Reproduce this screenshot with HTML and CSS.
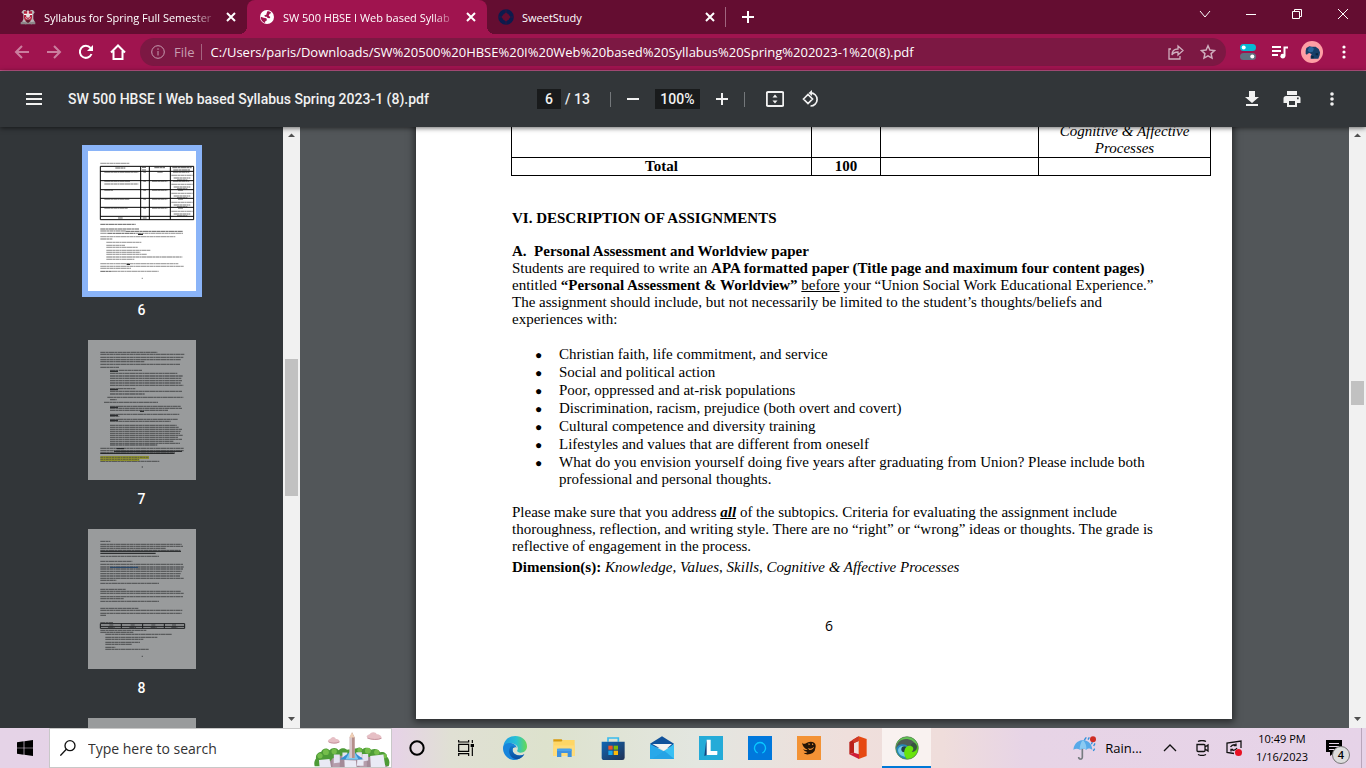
FILE: index.html
```html
<!DOCTYPE html>
<html lang="en">
<head>
<meta charset="utf-8">
<title>SW 500 HBSE I Web based Syllabus Spring 2023-1 (8).pdf</title>
<link rel="stylesheet" href="styles.css">
</head>
<body>
<header class="tabstrip">
  <div class="tab tab-first">
    <svg class="favicon" viewBox="0 0 48 48"><path d="M4 10l6-7h6l4 4 4-4 4 4 5-4h6l5 7-4 6v14l5 10-5 4-6 2-8-4-8 4-7-2-5-4 4-10V16z" fill="#b9b2b5"/><path d="M12 7h24v18c0 8-6 12-12 15-6-3-12-7-12-15z" fill="#b3203c"/><path d="M22 6h4v8h10v4H26v4h-4v-4H12v-4h10z" fill="#fff"/><circle cx="24" cy="20" r="6" fill="#e4dfe1"/><path d="M17 25c2 8 12 8 14 0" stroke="#e9d8dc" stroke-width="3" fill="none"/><path d="M2 40c8-5 14 3 22-2 8 5 14-3 22 2v6H2z" fill="#8d8689"/><path d="M16 36l8-5 8 5-8 6z" fill="#5e1a2c"/></svg>
    <span class="tab-title">Syllabus for Spring Full Semester</span>
    <button class="tab-close" aria-label="Close tab"><svg viewBox="0 0 10 10"><path d="M1 1l8 8M9 1L1 9"/></svg></button>
  </div>
  <div class="tab tab-active">
    <svg class="favicon" viewBox="0 0 48 48"><circle cx="24" cy="24" r="21" fill="#fff"/><path d="M25 7c4-1 9 1 12 5l-5 2-3 6 5 4-2 4-6-1-3-4h-5l-2-4 6-2 1-4z" fill="#a0144f"/><path d="M5 23l9 3 8 2 2 6-5 3-1 5C9 38 5 32 5 23z" fill="#a0144f"/></svg>
    <span class="tab-title">SW 500 HBSE I Web based Syllab</span>
    <button class="tab-close" aria-label="Close tab"><svg viewBox="0 0 10 10"><path d="M1 1l8 8M9 1L1 9"/></svg></button>
  </div>
  <div class="tab tab-last">
    <svg class="favicon" viewBox="0 0 48 48"><circle cx="24" cy="24" r="17" fill="none" stroke="#0c1b4d" stroke-width="13"/><path d="M24 0v10M24 38v10M0 24h10M38 24h10" stroke="#42103a" stroke-width="2"/><path d="M24 10l14 14-14 14-14-14z" fill="#640d31"/></svg>
    <span class="tab-title">SweetStudy</span>
    <button class="tab-close" aria-label="Close tab"><svg viewBox="0 0 10 10"><path d="M1 1l8 8M9 1L1 9"/></svg></button>
  </div>
  <button class="new-tab" aria-label="New tab"><svg viewBox="0 0 12 12"><path d="M6 0v12M0 6h12"/></svg></button>
  <div class="window-controls">
    <button aria-label="Search tabs"><svg viewBox="0 0 12 12"><path d="M1 3l5 6 5-6"/></svg></button>
    <button aria-label="Minimize"><svg viewBox="0 0 12 12"><path d="M1 6.500h10"/></svg></button>
    <button aria-label="Restore"><svg viewBox="0 0 12 12"><path d="M1.500 3.500h7v7h-7zM3.500 3.500v-2h7v7h-2"/></svg></button>
    <button aria-label="Close"><svg viewBox="0 0 12 12"><path d="M1 1l10 10M11 1L1 11"/></svg></button>
  </div>
</header>

<nav class="toolbar">
  <button class="tool dim" aria-label="Back"><svg viewBox="0 0 16 16"><path d="M15 8H2M8 2L2 8l6 6"/></svg></button>
  <button class="tool dim" aria-label="Forward"><svg viewBox="0 0 16 16"><path d="M1 8h13M8 2l6 6-6 6"/></svg></button>
  <button class="tool" aria-label="Reload"><svg viewBox="0 0 16 16"><path d="M13.500 10A6 6 0 1 1 12.500 4"/><path d="M15 1v6H9z" fill="#fff" stroke="none"/></svg></button>
  <button class="tool" aria-label="Home"><svg viewBox="0 0 16 16"><path d="M1 8.500L8 1.500l7 7M3.500 7v8h9V7"/></svg></button>
  <div class="omnibox">
    <svg class="info" viewBox="0 0 14 14"><circle cx="7" cy="7" r="6.300"/><path d="M7 6v4.500M7 3.300v1.500"/></svg>
    <label class="scheme" for="url">File</label>
    <input id="url" class="url" type="text" value="C:/Users/paris/Downloads/SW%20500%20HBSE%20I%20Web%20based%20Syllabus%20Spring%202023-1%20(8).pdf">
    <button class="omni-button" aria-label="Share"><svg viewBox="0 0 16 16"><path stroke-width="1.300" d="M3 5H1v10h11v-3M4 11c0-4 2-6 6-6V2l5 4.500-5 4.500V8c-3 0-5 1-6 3z"/></svg></button>
    <button class="omni-button" aria-label="Bookmark"><svg viewBox="0 0 16 16"><path stroke-width="1.500" d="M8 1.800l1.900 4.200 4.600.5-3.400 3.100.9 4.500L8 11.800l-4 2.300.9-4.500L1.500 6.500 6.100 6z"/></svg></button>
  </div>
  <button class="tool" aria-label="Extension"><svg viewBox="0 0 16 16" stroke="none"><rect y="0" width="16" height="7" rx="3.500" fill="#06b9d3"/><rect y="9" width="16" height="7" rx="3.500" fill="#607080"/><circle cx="3.700" cy="3.500" r="2" fill="#fff"/><circle cx="12.300" cy="12.500" r="2" fill="#fff"/></svg></button>
  <button class="tool" aria-label="Media controls"><svg viewBox="0 0 16 16"><path d="M0 3h9M0 7h9M0 11h6M12.500 12V3.500H16"/><circle cx="10.800" cy="12.200" r="2.400" fill="#fff" stroke="none"/></svg></button>
  <button class="tool" aria-label="Profile"><svg class="avatar" viewBox="0 0 66 66" stroke="none"><circle cx="33" cy="33" r="33" fill="#ff9fa5"/><path d="M14 29l2-8 9-5 8 1 11 0 9 7 4 10-1 9-4 10H29v-8l3-5-7-4-5 2-2 3-4-2z" fill="#173f68"/><path d="M24 19l9-1 6 5-4 9-9 2-6-5z" fill="#2a679c"/><path d="M31 45h7v7h-7zM44 37h7v6h-7z" fill="#0b253e"/></svg></button>
  <button class="tool" aria-label="Menu"><svg viewBox="0 0 16 16" stroke="none"><g fill="#fff"><circle cx="8" cy="3" r="1.600"/><circle cx="8" cy="8" r="1.600"/><circle cx="8" cy="13" r="1.600"/></g></svg></button>
</nav>

<section class="pdf-bar">
  <div class="pdf-left">
    <button class="pdf-button" aria-label="Toggle sidebar"><svg viewBox="0 0 18 18"><path d="M1 4h16M1 9h16M1 14h16"/></svg></button>
    <h1 class="pdf-title">SW 500 HBSE I Web based Syllabus Spring 2023-1 (8).pdf</h1>
  </div>
  <div class="pdf-center">
    <input class="page-input" type="text" value="6" aria-label="Page number">
    <span class="page-count">/ 13</span>
    <span class="divider"></span>
    <button class="pdf-button" aria-label="Zoom out"><svg viewBox="0 0 18 18"><path d="M3 9h12"/></svg></button>
    <input class="zoom-input" type="text" value="100%" aria-label="Zoom level">
    <button class="pdf-button" aria-label="Zoom in"><svg viewBox="0 0 18 18"><path d="M3 9h12M9 3v12"/></svg></button>
    <span class="divider"></span>
    <button class="pdf-button fit" aria-label="Fit to page"><svg viewBox="0 0 18 18"><rect x="0.800" y="2" width="16.500" height="14" rx="1.500"/><path d="M9 4.500l2.500 3h-5zM9 13.500l2.500-3h-5z" fill="#f1f1f1" stroke="none"/></svg></button>
    <button class="pdf-button" aria-label="Rotate"><svg viewBox="0 0 18 18"><path d="M1.500 9L6 4.500l4.500 4.500L6 13.500zM8.500 2.800a6.500 6.500 0 1 1 0 13.200" stroke-width="1.700"/><path d="M10 0v6L6.500 3z" fill="#f1f1f1" stroke="none"/></svg></button>
  </div>
  <div class="pdf-right">
    <button class="pdf-button" aria-label="Download"><svg viewBox="0 0 18 18"><path d="M6 1h6v6h4l-7 6-7-6h4zM3 14h12v2H3z" fill="#f1f1f1" stroke="none"/></svg></button>
    <button class="pdf-button" aria-label="Print"><svg viewBox="0 0 18 18"><path fill-rule="evenodd" d="M4 1h10v4H4zM3 6h12c2 0 2.500 1 2.500 2.500V13H14v4H4v-4H.5V8.500C.5 7 1.500 6 3 6zm3 5v4h6v-4zm8-3.500v1.700h1.700V7.500z" fill="#f1f1f1" stroke="none"/></svg></button>
    <button class="pdf-button" aria-label="More actions"><svg viewBox="0 0 18 18" stroke="none"><g fill="#f1f1f1"><circle cx="9" cy="4" r="1.800"/><circle cx="9" cy="9" r="1.800"/><circle cx="9" cy="14" r="1.800"/></g></svg></button>
  </div>
</section>

<main class="workspace">
  <aside class="sidebar">
    <div class="thumbs">
      <figure class="thumb selected">
        <svg viewBox="0 0 324 420">
          <g class="print"><path d="M37 37h88M49 64h102M49 91h78M49 99h102M49 118h27M49 145h75M49 172h70M166 64h8M166 91h8M166 118h8M166 145h8M166 172h8M208 64h16M192 91h46M192 118h46M192 145h46M192 172h46M255 64h49M250 73h64M257 81h50M267 87h31M255 91h49M250 100h64M257 108h50M267 113h31M270 118h15M250 127h64M257 135h50M267 140h31M270 145h15M250 154h64M257 162h50M267 167h31M270 172h15M250 181h64M257 189h50M267 194h31"/><path d="M37 240h76M37 247h20M143 247h142M37 257h226M37 264h36M55 274h106M55 283h56M55 289h94M55 298h132M55 304h102M55 310h122M55 318h228M55 325h84M37 338h234M37 346h250M37 352h92M72 361h140M161 382h4"/></g>
          <g class="print-bold"><path d="M82 51h30M162 49h12M162 57h12M199 50h32M253 50h58M256 57h50M90 201h14M164 201h12M37 220h106M37 234h116M113 241h172M58 247h84M37 361h34"/></g>
          <path class="rule" d="M37 46h280v160H37zM158 46v160M184 46v160M247 46v160M37 61h280M37 89h280M37 116h280M37 142h280M37 169h280M37 196h280M150 250h15M116 340h10"/>
        </svg>
        <figcaption>6</figcaption>
      </figure>
      <figure class="thumb">
        <svg viewBox="0 0 324 420">
          <g class="print"><path d="M128 37h80M37 43h252M37 52h249M37 59h242M37 65h132M37 73h240M37 82h56M92 91h70M66 100h202M66 108h218M66 115h214M66 122h216M66 129h212M66 136h220M90 146h52M66 154h216M66 162h104M58 172h228M66 179h20M48 187h162M90 199h188M66 205h216M66 211h174M90 223h184M66 229h28M90 238h180M66 244h182M66 256h200M66 262h206M66 268h216M66 274h212M66 280h210M66 286h218M66 292h204M66 298h216M66 304h190M66 310h210M66 315h142M37 325h250M37 332h250M37 339h224M72 364h142M161 381h4"/></g>
          <g class="print-bold"><path d="M37 37h90M66 91h24M66 146h24M66 199h24M66 223h24M66 238h24M37 364h34"/></g>
          <path d="M37 348h146v9H37zM37 355h117v8H37z" fill="#e6e600" opacity=".85"/>
          <path d="M37 352h144M37 358h116" stroke="#555" stroke-width="2" stroke-dasharray="8 2 5 2"/>
          <path class="rule" d="M66 94h24M66 149h24M66 202h24M66 226h24M66 241h24M156 214h12M86 326h22M78 334h204M37 340h222"/>
        </svg>
        <figcaption>7</figcaption>
      </figure>
      <figure class="thumb">
        <svg viewBox="0 0 324 420">
          <g class="print"><path d="M37 46h244M37 52h248M37 58h196M72 82h141M37 106h248M37 114h250M37 120h248M37 127h244M37 134h242M37 141h240M37 148h250M37 154h48M72 163h141M37 187h242M37 193h250M37 203h248M37 209h70M72 217h141M37 244h246M37 253h244M37 259h18M37 310h100M52 316h200M52 325h156M52 331h114M52 340h104M52 346h80M52 355h30M52 361h130M161 382h4"/></g>
          <g class="print-bold"><path d="M37 37h30M37 64h240M37 82h34M37 97h96M37 163h34M37 181h76M37 217h34M37 238h114M37 281h38M64 288h12M128 288h12M190 288h12M252 288h12M60 295h20M124 295h20M188 295h18M250 295h18M37 304h138"/></g>
          <path class="rule" d="M37 67h242M37 73h166M37 284h253v14H37zM100 284v14M164 284v14M229 284v14M37 292h253"/>
          <path d="M66 115h84" stroke="#0b4fa0" stroke-width="3"/>
        </svg>
        <figcaption>8</figcaption>
      </figure>
      <figure class="thumb"><svg viewBox="0 0 324 420"></svg></figure>
    </div>
    <div class="scrollbar side-scroll"><svg viewBox="0 0 17 17"><path d="M5 10h7L8.500 6.500z"/></svg><span class="track"></span><span class="grip"></span><span class="track"></span><svg viewBox="0 0 17 17"><path d="M5 6h7L8.500 10z"/></svg></div>
  </aside>

  <div class="viewer">
    <article class="page">
      <table class="grades">
        <colgroup><col class="c1"><col class="c2"><col class="c3"><col class="c4"></colgroup>
        <tbody>
          <tr class="cut"><td></td><td></td><td></td><td><i>Cognitive &amp; Affective Processes</i></td></tr>
          <tr><th>Total</th><th>100</th><td></td><td></td></tr>
        </tbody>
      </table>
      <h2>VI. DESCRIPTION OF ASSIGNMENTS</h2>
      <h3>A.&nbsp; Personal Assessment and Worldview paper</h3>
      <p>Students are required to write an <b>APA formatted paper (Title page and maximum four content pages)</b><br>
      entitled <b>“Personal Assessment &amp; Worldview”</b> <u>before</u> your “Union Social Work Educational Experience.”<br>
      The assignment should include, but not necessarily be limited to the student’s thoughts/beliefs and<br>
      experiences with:</p>
      <ul>
        <li>Christian faith, life commitment, and service</li>
        <li>Social and political action</li>
        <li>Poor, oppressed and at-risk populations</li>
        <li>Discrimination, racism, prejudice (both overt and covert)</li>
        <li>Cultural competence and diversity training</li>
        <li>Lifestyles and values that are different from oneself</li>
        <li>What do you envision yourself doing five years after graduating from Union? Please include both<br>professional and personal thoughts.</li>
      </ul>
      <p>Please make sure that you address <b><i><u>all</u></i></b> of the subtopics. Criteria for evaluating the assignment include<br>
      thoroughness, reflection, and writing style. There are no “right” or “wrong” ideas or thoughts. The grade is<br>
      reflective of engagement in the process.</p>
      <p class="dimensions"><b>Dimension(s):</b> <i>Knowledge, Values, Skills, Cognitive &amp; Affective Processes</i></p>
      <footer class="folio">6</footer>
    </article>
  </div>
  <div class="scrollbar main-scroll"><svg viewBox="0 0 17 17"><path d="M5 10h7L8.500 6.500z"/></svg><span class="track"></span><span class="grip"></span><span class="track after"></span><svg viewBox="0 0 17 17"><path d="M5 6h7L8.500 10z"/></svg></div>
</main>

<footer class="taskbar">
  <button class="task" aria-label="Start"><svg viewBox="0 0 48 48" class="i16"><path d="M0 7l20-3v19H0zM22 4l26-4v23H22zM0 25h20v19L0 41zM22 25h26v23l-26-4z"/></svg></button>
  <div class="search">
    <svg class="lens" viewBox="0 0 48 48"><circle cx="30" cy="17" r="15"/><path d="M19 28L1 47"/></svg>
    <input type="text" placeholder="Type here to search" aria-label="Search">
    <svg class="castle" viewBox="940 33 234 109">
      <path d="M984 65c0-7 8-8 10-11 4-5 12-3 14 3 6-1 13 3 11 10-8 6-28 5-35-2zM1101 50c2-6 9-5 12-10 6-6 17-4 19 3 8 0 16 5 14 13-10 6-38 6-45-6z" fill="#e6bfc5"/>
      <path d="M986 66c8 5 24 5 33 0M1103 54c12 6 34 6 43 1" stroke="#c4929c" stroke-width="3" fill="none"/>
      <path d="M944 140c-3-12 0-18 4-24-2-12 8-19 16-20 2-10 17-14 25-5 8-9 22-8 27 0 8-8 20-8 26-1l30-5c8-4 14 0 17 3 9-7 21-5 26 2 10-6 23-2 27 7 12-3 21 4 21 14 8 8 9 18 5 29z" fill="#4d9b37"/>
      <g fill="#74bd4b"><circle cx="960" cy="108" r="8"/><circle cx="978" cy="97" r="9"/><circle cx="1003" cy="95" r="8"/><circle cx="1080" cy="91" r="7"/><circle cx="1105" cy="93" r="9"/><circle cx="1132" cy="97" r="8"/><circle cx="1156" cy="109" r="7"/></g>
      <path d="M975 142l23-26 22-8h70l34 6 42 28z" fill="#a38b98"/>
      <path d="M998 116h22v26h-22zM1080 108h22v34h-22z" fill="#b59eac"/>
      <path d="M1002 104h18v24l-18 3zM1028 98h15v16h-15zM1070 97h17v15h-17zM1088 103h18v19l-18 3z" fill="#e4e3f1"/>
      <path d="M1057 92l35 27h-72z" fill="#348fd4"/><path d="M1057 84l20 35h-40z" fill="#7cc7ee"/>
      <path d="M1049 115V53l8-16 8 16v62z" fill="#d8c5c9"/><path d="M1057 37l8 16v62h-8z" fill="#b58f8b"/><path d="M1049 53l8-16 8 16z" fill="#f0cfb5"/>
      <path d="M957 121l32-3 5 26h-35zM1034 121l35 1 2 22h-36zM1073 121l19-2v19h-20zM1112 109l40-5 6 38h-44z" fill="#e9eaf5"/>
    </svg>
  </div>
  <button class="task" aria-label="Cortana"><svg viewBox="0 0 48 48" class="i16"><circle cx="24" cy="24" r="20" fill="none" stroke="#000" stroke-width="6"/></svg></button>
  <button class="task" aria-label="Task view"><svg viewBox="0 0 48 48" class="i16"><path d="M2 0v6h30V0M2 48v-7h30v7M2 13h30v21H2zM43 0v9M43 22v26" fill="none" stroke="#000" stroke-width="3.500"/><path d="M38 12h10v9H38z"/></svg></button>
  <button class="task" aria-label="Edge"><svg viewBox="0 0 72 72"><defs><linearGradient id="edgeTop"><stop offset="0" stop-color="#1e9ce4"/><stop offset=".55" stop-color="#27c1d4"/><stop offset="1" stop-color="#68d952"/></linearGradient><linearGradient id="edgeLow" x2="0" y2="1"><stop offset="0" stop-color="#1378ca"/><stop offset="1" stop-color="#0c4e9f"/></linearGradient></defs><path d="M1 34C2 13 17 0 37 0c20 0 35 14 35 31 0 12-9 19-19 19-8 0-12-4-10-7 3-4 2-15-9-19C20 20 7 26 1 34z" fill="url(#edgeTop)"/><path d="M0 37c0-9 8-15 18-16 12-1 22 6 23 14-10-4-15 4-11 13 5 10 20 14 34 7C55 67 47 72 36 72 16 72 0 57 0 37z" fill="#1785dc"/><path d="M22 32c-11 17 2 37 20 38 9 0 17-7 22-15-14 7-29 3-34-7-3-7-1-15 6-14-5-5-10-5-14-2z" fill="url(#edgeLow)"/></svg></button>
  <button class="task" aria-label="File Explorer"><svg viewBox="0 0 72 72"><path d="M4 10h25l5 7H4z" fill="#d99a0b"/><path d="M4 17h24l6-5h34v48H4z" fill="#ffd665"/><path d="M4 28h64v32H4z" fill="#ffdc79"/><path d="M15 63V43l5-5h34l5 5v20H47V51H28v12z" fill="#3d91df"/><path d="M15 38h44v7H15z" fill="#4aa2ec"/></svg></button>
  <button class="task" aria-label="Store"><svg viewBox="0 0 72 72"><path d="M21 17V6h31v11" fill="none" stroke="#39bbed" stroke-width="5"/><defs><linearGradient id="bag" x2="1" y2="1"><stop stop-color="#0f67b5"/><stop offset="1" stop-color="#213154"/></linearGradient></defs><path d="M2 17h69v48q0 7-7 7H10q-8 0-8-7z" fill="url(#bag)"/><path d="M22 29h13v12H22z" fill="#f35325"/><path d="M38 29h13v12H38z" fill="#81bc06"/><path d="M22 44h13v13H22z" fill="#18a7ec"/><path d="M38 44h13v13H38z" fill="#ffba08"/></svg></button>
  <button class="task" aria-label="Mail"><svg viewBox="0 0 72 72"><path d="M0 23L36 1l36 22-10 12H10z" fill="#10529b"/><path d="M7 24h59L43 44z" fill="#f4f3f2"/><path d="M0 24l44 23L12 69H0z" fill="#28a8ea"/><path d="M72 24v45H4l39-25z" fill="#39c0f3"/><path d="M43 44l29 24v1H4z" fill="#168bd8" opacity=".55"/></svg></button>
  <button class="task" aria-label="L app"><svg viewBox="0 0 72 72"><path d="M0 0h72v72H0z" fill="#24abd8"/><path d="M22 12l-6 48 8-3h31v-3H30z" fill="#11457f"/><path d="M23 11h12v34h20v12H23z" fill="#fff"/></svg></button>
  <button class="task" aria-label="Alexa"><svg viewBox="0 0 72 72"><path d="M0 0h72v72H0z" fill="#0078dc"/><path d="M29 51a16.500 16.500 0 1 1 14 0" fill="none" stroke="#08c8ff" stroke-width="4"/></svg></button>
  <button class="task" aria-label="Photo app"><svg viewBox="0 0 72 72"><path d="M0 0h72v72H0z" fill="#f39235"/><path d="M15 20q5 6 12 2 8-7 20-4 10 4 9 14-1 13-9 19-9 5-19 4-6-1-8-5 8 2 11-2-9-1-13-8 8 4 14 1-14-4-17-21z" fill="#241507"/><path d="M34 22l6 2-5 4zM45 22l5 3-5 3zM32 36q11 6 19-4-1 9-14 10z" fill="#f39235"/></svg></button>
  <button class="task" aria-label="Office"><svg viewBox="0 0 72 72"><path d="M10 18L38 1v14L24 21v29l-14 5z" fill="#b9201a"/><path d="M38 1l24 8v51l-24 9V15z" fill="#e64912"/><path d="M10 55l14-5 15 5v14z" fill="#cf1d37"/><path d="M38 1v14L24 21l-5-9z" fill="#d13825"/></svg></button>
  <button class="task current" aria-label="Web browser"><svg viewBox="0 0 72 72"><circle cx="36" cy="36" r="34" fill="#4fcf14"/><path d="M3 40C-1 18 15 2 36 2c18 0 32 13 34 30-8-14-22-17-32-9-12-4-27 0-35 17z" fill="#63c653"/><path d="M3 39C4 17 22 6 40 10c14 3 24 12 26 25-7-11-19-10-22-1-15-9-31-8-41 5z" fill="#4e5c55"/><path d="M3 37c7-14 26-17 37-5-9 4-14 16-6 37C17 69 4 56 3 37z" fill="#2588bb"/><path d="M9 42c2-11 16-16 26-8-6 8-7 17-4 28C19 61 10 54 9 42z" fill="#74c9e4"/><circle cx="28" cy="40" r="9" fill="#213f48"/><path d="M28 45c2-11 10-17 20-15 9 2 11 14 4 19 8 0 14-5 16-12 0 18-13 32-30 33-9-6-12-16-10-25z" fill="#69e40c"/><path d="M47 30c9 1 11 11 3 18 14-1 20-13 13-23-5-7-15-5-16 5z" fill="#36553f"/><circle cx="36" cy="36" r="34" fill="none" stroke="#58745e" stroke-width="2"/></svg></button>
  <div class="tray">
    <button class="weather"><svg viewBox="0 0 72 72"><path d="M1 41C4 18 20 13 30 12c17 1 27 13 28 29-9-5-13-5-18 0-6-4-12-4-19 0-7-4-13-4-20 0z" fill="#57a9e8"/><path d="M20 40c1-15 6-25 10-28 8 9 11 18 10 29-7-4-13-4-20-1z" fill="#8bcaf2"/><path d="M28 39v25c0 7-11 7-11-1" fill="none" stroke="#777b80" stroke-width="5"/><path d="M40 4l-6 8M49 4l-4 7M58 18l-3 7M66 22l-4 8M65 38l-4 7" stroke="#3190da" stroke-width="4"/><circle cx="60" cy="10" r="9" fill="#cf2d25"/></svg><span>Rain...</span></button>
    <button class="tray-icon" aria-label="Show hidden icons"><svg viewBox="0 0 16 16"><path d="M2 11l6-6 6 6"/></svg></button>
    <button class="tray-icon" aria-label="Meet now"><svg viewBox="0 0 16 16"><path d="M3 4.500h7q1 0 1 1v5q0 1-1 1H4q-1 0-1-1zM11 7l3-2v6l-3-2M4 1.500q4-2 8 0M4 14.500q4 2 8 0"/></svg></button>
    <button class="tray-icon" aria-label="Update"><svg viewBox="0 0 16 16"><path d="M8 13.500L1 12.500V3l14-2v7M4.500 7q2-3 5-2M10 3.500v2H8M11 8q-2 3-5 2M5 11.500v-2h2"/><circle cx="12.500" cy="12.500" r="3.500" fill="#e81123" stroke="none"/></svg></button>
    <div class="clock"><time>10:49 PM</time><time>1/16/2023</time></div>
    <button class="notify" aria-label="Notifications"><svg viewBox="0 0 16 16"><path d="M0 0h16v12h-7l-5 4v-4H0z"/><path d="M3 3.500h10M3 6.500h10M3 9.500h6" stroke="#e6d3e8"/></svg><span class="badge">4</span></button>
  </div>
</footer>
</body>
</html>
```
FILE: styles.css
```css
* { box-sizing: border-box; }
body {
  margin: 0;
  height: 100vh;
  display: flex;
  flex-direction: column;
  overflow: hidden;
  font-family: "Open Sans", "Noto Sans", sans-serif;
  font-size: 11px;
  color: #fff;
}
button, input { font: inherit; color: inherit; border: 0; padding: 0; background: none; outline: 0; }
button { display: flex; align-items: center; justify-content: center; }
svg { display: block; flex: none; }

/* Tab strip */
.tabstrip { display: flex; height: 34px; flex: none; background: #640d31; }
.tab { display: flex; align-items: center; gap: 8px; width: 240px; height: 34px; flex: 0 1 auto; padding: 0 10px 0 12px; position: relative; }
.tab-first { width: 247px; padding-left: 20px; }
.tab-active { background: #a0144f; border-radius: 8px 8px 0 0; }
.tab-active::before, .tab-active::after { content: ""; position: absolute; bottom: 0; width: 8px; height: 8px; }
.tab-active::before { right: 100%; background: radial-gradient(circle at 0 0, transparent 8px, #a0144f 8px); }
.tab-active::after { left: 100%; background: radial-gradient(circle at 100% 0, transparent 8px, #a0144f 8px); }
.tab-last { width: 239px; padding-left: 11px; }
.tab-last::after { content: ""; width: 1px; height: 20px; background: #a0657f; position: absolute; right: 0; top: 7px; }
.favicon { width: 16px; height: 16px; }
.tab-title { flex: 1; min-width: 0; overflow: hidden; white-space: nowrap; }
.tab-first .tab-title, .tab-active .tab-title { mask-image: linear-gradient(90deg, #000 86%, transparent); }
.tab-close { width: 12px; height: 16px; }
.tab-close svg { width: 10px; height: 10px; stroke: #fff; stroke-width: 2; }
.new-tab { width: 44px; }
.new-tab svg { width: 12px; height: 12px; stroke: #fff; stroke-width: 2; }
.window-controls { display: flex; margin-left: auto; padding-bottom: 6px; }
.window-controls button { width: 46px; }
.window-controls svg { width: 12px; height: 12px; fill: none; stroke: #fff; }

/* Address bar */
.toolbar { display: flex; align-items: center; height: 37px; flex: none; padding: 0 6px; background: #a0144f; border-bottom: 1px solid #c2588a; }
.tool { width: 32px; height: 32px; }
.tool svg { width: 16px; height: 16px; fill: none; stroke: #fff; stroke-width: 2; }
.tool svg[stroke="none"] { stroke: none; }
.tool .avatar { width: 22px; height: 22px; }
.dim { opacity: .45; }
.omnibox { flex: 1; display: flex; align-items: center; height: 28px; margin: 0 6px; padding: 0 2px 0 11px; border-radius: 14px; background: #7c1843; font-size: 13px; }
.info { width: 14px; height: 14px; fill: none; stroke: #c79db0; }
.scheme { padding: 0 6px 0 9px; color: #c79db0; border-right: 1px solid #a4647f; line-height: 16px; }
.url { flex: 1; min-width: 0; padding-left: 9px; }
.omni-button { width: 32px; height: 28px; }
.omni-button svg { width: 16px; height: 16px; fill: none; stroke: #cfaebd; }

/* PDF toolbar */
.pdf-bar { display: grid; grid-template-columns: 1fr auto 1fr; align-items: center; height: 56px; flex: none; background: #323639; color: #f1f1f1; font-family: Roboto, sans-serif; font-size: 14px; font-weight: 500; box-shadow: 0 1px 5px rgba(0,0,0,.6); z-index: 1; }
.pdf-left { display: flex; align-items: center; gap: 16px; padding-left: 16px; }
.pdf-title { margin: 0; font-size: 14px; font-weight: 500; white-space: nowrap; }
.pdf-center { display: flex; align-items: center; }
.pdf-button { width: 36px; height: 36px; }
.pdf-button svg { width: 18px; height: 18px; fill: none; stroke: #f1f1f1; stroke-width: 2; }
.pdf-button svg[stroke="none"] { stroke: none; }
.page-input, .zoom-input { height: 20px; background: #191b1c; text-align: center; }
.page-input { width: 24px; }
.zoom-input { width: 45px; margin: 0 4px; }
.page-count { padding: 0 20px 0 4px; }
.divider { width: 1px; height: 15px; background: #74787b; margin-right: 4px; }
.zoom-input + .pdf-button + .divider { margin: 0 12px 0 4px; }
.pdf-right { display: flex; justify-content: flex-end; gap: 4px; padding-right: 16px; }

/* Workspace */
.workspace { display: flex; flex: 1; min-height: 0; }
.sidebar { width: 300px; display: flex; flex: none; background: #323639; }
.thumbs { flex: 1; overflow: hidden; padding-top: 24px; }
.thumb { margin: 0 0 19px; display: flex; flex-direction: column; align-items: center; gap: 9px; font-family: Roboto, sans-serif; font-size: 14px; font-weight: 500; line-height: 21px; }
.thumb svg { width: 108px; height: 140px; background: #fff; opacity: .5; }
.thumb.selected svg { opacity: 1; box-shadow: 0 0 0 6px #8ab4f8; }
.print, .print-bold, .rule { fill: none; stroke-width: 3; }
.print { stroke: #a6a6a6; stroke-width: 4; stroke-dasharray: 17 1 8 1 11 1 5 1 14 1; }
.thumb:not(.selected) .print { stroke: #808080; }
.print-bold { stroke: #666; stroke-dasharray: 15 1 9 1; }
.rule { stroke: #000; }
.scrollbar { width: 17px; display: flex; flex-direction: column; align-items: center; background: #f1f1f1; }
.scrollbar svg { width: 17px; height: 17px; fill: #505050; }
.track { flex: 1; }
.grip { width: 13px; height: 24px; background: #c1c1c1; }
.side-scroll .grip { height: 137px; }
.main-scroll .track { flex-grow: 237; }
.main-scroll .after { flex-grow: 306; }
.viewer { flex: 1; min-width: 0; overflow: hidden; padding: 0 116px; background: #525659; }

/* Document */
.page { max-width: 816px; padding: 0 20px 85px 96px; background: #fff; color: #000; box-shadow: 0 1px 7px 2px rgba(0,0,0,.5); font: 15px/17px "Liberation Serif", serif; white-space: nowrap; }
.grades { width: 700px; margin: -4px 0 34px -1px; border-collapse: collapse; table-layout: fixed; white-space: normal; text-align: center; }
.grades td, .grades th { padding: 0 20px; border: 1px solid #000; height: 18px; }
.grades th { padding: 0; }
.grades .cut td { height: 34px; border-top: 0; }
.c1 { width: 300px; } .c2 { width: 69px; } .c3 { width: 158px; } .c4 { width: 172px; }
.page h2, .page h3, .page p { margin: 0; font-size: 15px; line-height: 17px; }
.page h2 { margin-bottom: 16px; }
.page ul { margin: 17px 0 16px; padding-left: 47px; list-style: none; }
.page li { padding-top: 1px; }
.page li::before { content: "●"; display: inline-block; width: 24px; margin-left: -24px; font-size: 12px; line-height: 9px; }
.page .dimensions { margin-top: 4px; }
.folio { margin-top: 41px; padding-right: 66px; text-align: center; font-family: "Open Sans", sans-serif; font-size: 14px; }

/* Taskbar */
.taskbar { display: flex; height: 40px; flex: none; z-index: 1; color: #000; background: linear-gradient(90deg, #e5d3e7 0, #e6d3e6 29%, #e0e0d4 33%, #dde2cd 40%, #e3e6e0 51%, #efdfdc 62%, #efdddb 69%, #e7d4e6 75%, #e6d3e8 100%); }
.task { width: 49px; height: 40px; flex: none; }
.task svg { width: 24px; height: 24px; }
.task .i16 { width: 16px; height: 16px; }
.current { background: #f9f2f0; border-bottom: 2px solid #0078d7; padding-top: 2px; }
.search { display: flex; align-items: center; width: 343px; flex: 0 1 auto; background: #fff; border: 1px solid #c8c8c8; padding-left: 10px; }
.search .lens { width: 16px; height: 16px; fill: none; stroke: #111; stroke-width: 4; }
.search input { flex: 1; min-width: 0; padding-left: 12px; font-size: 14px; }
.search input::placeholder { color: #333; opacity: 1; }
.castle { width: 78px; height: 36px; align-self: flex-end; }
.tray { display: flex; align-items: center; margin-left: auto; padding-right: 4px; }
.weather { gap: 8px; font-size: 13px; margin-right: 12px; }
.weather svg { width: 24px; height: 24px; }
.tray-icon { width: 32px; height: 40px; }
.tray-icon svg { width: 16px; height: 16px; fill: none; stroke: #111; }
.tray-icon path { stroke-width: 1.300; }
.clock { width: 64px; display: flex; flex-direction: column; text-align: center; line-height: 18px; }
.notify { width: 48px; height: 40px; position: relative; border-right: 1px solid #b9a6bb; }
.notify svg { width: 16px; height: 16px; margin-right: 8px; }
.badge { position: absolute; left: 18px; top: 18px; width: 18px; height: 18px; border: 1px solid #777; border-radius: 50%; background: #ddd; font-size: 11px; line-height: 16px; font-weight: 600; }
```
